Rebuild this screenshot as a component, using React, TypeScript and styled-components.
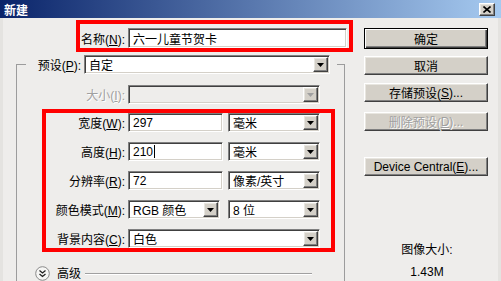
import styled, { createGlobalStyle, css } from "styled-components";

const GlobalStyle = createGlobalStyle`
  html, body {
    margin: 0;
    padding: 0;
    background: #eeedeb;
  }
  body {
    font-family: "Liberation Sans", "Noto Sans CJK SC", sans-serif;
    font-size: 12px;
    color: #000;
  }
  * {
    box-sizing: border-box;
  }
`;

const raised = css`
  border: 1px solid;
  border-color: #ffffff #404040 #404040 #ffffff;
  box-shadow: inset -1px -1px 0 #808080, inset 1px 1px 0 #e8e6e0;
`;

const sunken = css`
  border: 1px solid;
  border-color: #808080 #ffffff #ffffff #808080;
  box-shadow: inset 1px 1px 0 #404040, inset -1px -1px 0 #d4d0c8;
`;

const Window = styled.div`
  width: 501px;
  height: 281px;
  overflow: hidden;
  display: flex;
  flex-direction: column;
  background: #eeedeb;
`;

const TitleBar = styled.div`
  height: 18px;
  flex: none;
  display: flex;
  align-items: center;
  justify-content: space-between;
  padding: 0 6px 0 4px;
  background: linear-gradient(to right, #0a246a, #a6caf0);
  color: #fff;
  font-weight: bold;
  font-size: 12px;
`;

const CloseButton = styled.div`
  width: 16px;
  height: 13px;
  background: #d4d0c8;
  ${raised};
  display: flex;
  align-items: center;
  justify-content: center;
`;

const Body = styled.div`
  flex: 1;
  display: flex;
  border-left: 3px solid #e4e3e0;
  border-right: 3px solid #e4e3e0;
`;

const LeftPane = styled.div`
  width: 352px;
  flex: none;
  display: flex;
  flex-direction: column;
`;

const RightPane = styled.div`
  width: 124px;
  margin-left: 9px;
  padding-top: 10px;
  display: flex;
  flex-direction: column;
`;

const Highlight = styled.div<{ $ml: number; $mt: number; $w: number }>`
  margin: ${(p) => p.$mt}px 0 0 ${(p) => p.$ml}px;
  width: ${(p) => p.$w}px;
  border: 4px solid #ff0000;
`;

const NameRow = styled.div`
  display: flex;
  align-items: center;
  height: 24px;
  padding: 4px 2px 0 0;
`;

const Label = styled.span<{ $w: number; $disabled?: boolean }>`
  width: ${(p) => p.$w}px;
  flex: none;
  text-align: right;
  margin-right: 3px;
  white-space: nowrap;
  color: ${(p) => (p.$disabled ? "#a0a0a0" : "#000")};
  text-shadow: ${(p) => (p.$disabled ? "1px 1px 0 #fff" : "none")};
`;

const Field = styled.div<{ $w?: number; $h?: number; $disabled?: boolean }>`
  width: ${(p) => (p.$w ? `${p.$w}px` : "auto")};
  flex: ${(p) => (p.$w ? "none" : "1")};
  height: ${(p) => p.$h ?? 19}px;
  ${sunken};
  background: ${(p) => (p.$disabled ? "#eeedeb" : "#fff")};
  display: flex;
  align-items: center;
  padding: 1px 1px 1px 4px;
  white-space: nowrap;
`;

const Value = styled.span`
  flex: 1;
  display: flex;
  align-items: center;
`;

const Caret = styled.span`
  display: inline-block;
  width: 1px;
  height: 13px;
  background: #000;
  margin-left: 1px;
`;

const ArrowButton = styled.div<{ $disabled?: boolean }>`
  width: 15px;
  align-self: stretch;
  flex: none;
  background: #d4d0c8;
  ${raised};
  display: flex;
  align-items: center;
  justify-content: center;
  svg {
    fill: ${(p) => (p.$disabled ? "#a0a0a0" : "#000")};
  }
`;

const GroupBox = styled.fieldset`
  margin: 3px 0 0 13px;
  padding: 0;
  width: 329px;
  min-width: 0;
  border: 1px solid #9c9c9c;
  border-bottom: none;
  flex: 1;
`;

const Legend = styled.legend`
  margin-left: 9px;
  padding: 0 7px 0 0;
  display: flex;
  align-items: center;
`;

const Row = styled.div<{ $mt?: number }>`
  display: flex;
  align-items: center;
  height: 19px;
  margin-top: ${(p) => p.$mt ?? 0}px;
`;

const Gap = styled.div<{ $w: number }>`
  width: ${(p) => p.$w}px;
  flex: none;
`;

const RowStack = styled.div`
  display: flex;
  flex-direction: column;
  gap: 10px;
`;

const AdvancedRow = styled.div`
  display: flex;
  align-items: center;
  margin: 14px 0 0 18px;
  height: 15px;
`;

const AdvancedText = styled.span`
  margin-left: 7px;
  line-height: 14px;
`;

const Rule = styled.div`
  width: 227px;
  height: 2px;
  margin-left: 4px;
  border-top: 1px solid #a0a0a0;
  border-bottom: 1px solid #fff;
`;

const Button = styled.div<{ $default?: boolean; $disabled?: boolean; $mt?: number }>`
  height: ${(p) => (p.$default ? 21 : 19)}px;
  margin-top: ${(p) => p.$mt ?? 0}px;
  background: #d4d0c8;
  display: flex;
  align-items: center;
  justify-content: center;
  white-space: nowrap;
  color: ${(p) => (p.$disabled ? "#a0a0a0" : "#000")};
  text-shadow: ${(p) => (p.$disabled ? "1px 1px 0 #fff" : "none")};
  ${(p) =>
    p.$default
      ? css`
          border: 1px solid #000;
          box-shadow: inset 1px 1px 0 #fff, inset -1px -1px 0 #404040,
            inset -2px -2px 0 #808080;
        `
      : raised};
`;

const Info = styled.div<{ $mt: number }>`
  margin-top: ${(p) => p.$mt}px;
  line-height: 14px;
  text-align: center;
  padding-left: 2px;
`;

const Arrow = ({ disabled }: { disabled?: boolean }) => (
  <ArrowButton $disabled={disabled}>
    <svg width="7" height="4" viewBox="0 0 7 4">
      <polygon points="0,0 7,0 3.5,4" />
    </svg>
  </ArrowButton>
);

const Select = ({
  value,
  w,
  disabled,
}: {
  value: string;
  w?: number;
  disabled?: boolean;
}) => (
  <Field $w={w} $disabled={disabled}>
    <Value>{value}</Value>
    <Arrow disabled={disabled} />
  </Field>
);

export default function App() {
  return (
    <>
      <GlobalStyle />
      <Window>
        <TitleBar>
          <span>新建</span>
          <CloseButton>
            <svg width="8" height="7" viewBox="0 0 8 7">
              <path d="M0.5 0.5 L7.5 6.5 M7.5 0.5 L0.5 6.5" stroke="#000" strokeWidth="1.6" />
            </svg>
          </CloseButton>
        </TitleBar>
        <Body>
          <LeftPane>
            <Highlight $ml={73} $mt={2} $w={277}>
              <NameRow>
                <Label $w={45}>
                  名称(<u>N</u>):
                </Label>
                <Field $h={20}>
                  <Value>六一儿童节贺卡</Value>
                </Field>
              </NameRow>
            </Highlight>

            <GroupBox>
              <Legend>
                <Label $w={55}>
                  预设(<u>P</u>):
                </Label>
                <Select value="自定" w={246} />
              </Legend>

              <Row $mt={11}>
                <Label $w={108} $disabled>
                  大小(<u>I</u>):
                </Label>
                <Select value="" w={192} disabled />
              </Row>

              <Highlight $ml={25} $mt={5} $w={293}>
                <RowStack>
                  <Row>
                    <Label $w={79}>
                      宽度(<u>W</u>):
                    </Label>
                    <Field $w={95}>
                      <Value>297</Value>
                    </Field>
                    <Gap $w={5} />
                    <Select value="毫米" w={92} />
                  </Row>
                  <Row>
                    <Label $w={79}>
                      高度(<u>H</u>):
                    </Label>
                    <Field $w={95}>
                      <Value>
                        210
                        <Caret />
                      </Value>
                    </Field>
                    <Gap $w={5} />
                    <Select value="毫米" w={92} />
                  </Row>
                  <Row>
                    <Label $w={79}>
                      分辨率(<u>R</u>):
                    </Label>
                    <Field $w={95}>
                      <Value>72</Value>
                    </Field>
                    <Gap $w={5} />
                    <Select value="像素/英寸" w={92} />
                  </Row>
                  <Row>
                    <Label $w={79}>
                      颜色模式(<u>M</u>):
                    </Label>
                    <Select value="RGB 颜色" w={92} />
                    <Gap $w={8} />
                    <Select value="8 位" w={92} />
                  </Row>
                  <Row>
                    <Label $w={79}>
                      背景内容(<u>C</u>):
                    </Label>
                    <Select value="白色" w={192} />
                  </Row>
                </RowStack>
              </Highlight>

              <AdvancedRow>
                <svg width="15" height="15" viewBox="0 0 15 15">
                  <circle cx="7.5" cy="7.5" r="6.8" fill="#f6f6f4" stroke="#8a8a8a" />
                  <path
                    d="M4.5 4.5 L7.5 7 L10.5 4.5 M4.5 8 L7.5 10.5 L10.5 8"
                    fill="none"
                    stroke="#222"
                    strokeWidth="1.3"
                  />
                </svg>
                <AdvancedText>高级</AdvancedText>
                <Rule />
              </AdvancedRow>
            </GroupBox>
          </LeftPane>

          <RightPane>
            <Button $default>确定</Button>
            <Button $mt={7}>取消</Button>
            <Button $mt={8}>
              存储预设(<u>S</u>)...
            </Button>
            <Button $mt={10} $disabled>
              删除预设(<u>D</u>)...
            </Button>
            <Button $mt={26}>
              Device Central(<u>E</u>)...
            </Button>
            <Info $mt={67}>图像大小:</Info>
            <Info $mt={8}>1.43M</Info>
          </RightPane>
        </Body>
      </Window>
    </>
  );
}
